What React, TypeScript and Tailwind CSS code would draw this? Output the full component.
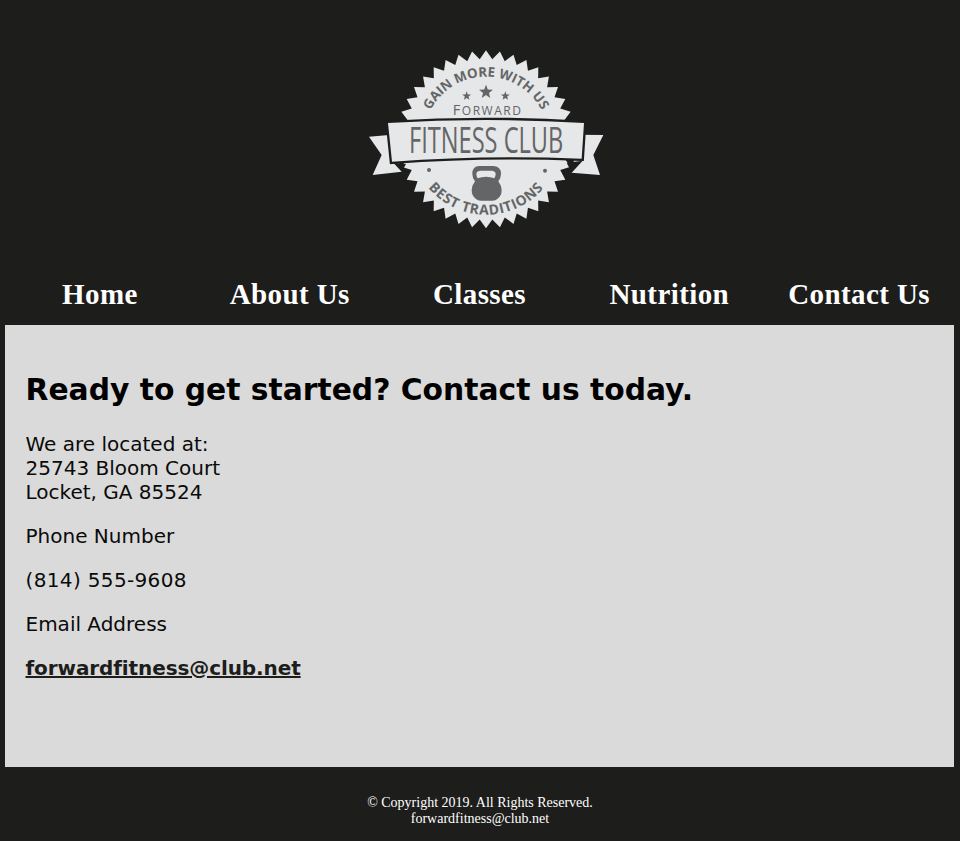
const seal = () => {
  const points: string[] = [];
  const teeth = 40;
  for (let i = 0; i < teeth * 2; i++) {
    const r = i % 2 === 0 ? 267 : 241;
    const a = (Math.PI * i) / teeth - Math.PI / 2;
    points.push(`${(378 + r * Math.cos(a)).toFixed(1)},${(298 + r * Math.sin(a)).toFixed(1)}`);
  }
  return points.join(" ");
};

const star = (cx: number, cy: number, r: number) => {
  const points: string[] = [];
  for (let i = 0; i < 10; i++) {
    const d = i % 2 === 0 ? r : r * 0.42;
    const a = (Math.PI * i) / 5 - Math.PI / 2;
    points.push(`${(cx + d * Math.cos(a)).toFixed(1)},${(cy + d * Math.sin(a)).toFixed(1)}`);
  }
  return points.join(" ");
};

const Logo = () => (
  <svg viewBox="-15 0 750 585" className="block mx-auto w-[250px] h-[195px]">
    <defs>
      <path id="topArc" d="M 190 298 A 188 188 0 0 1 566 298" />
      <path id="bottomArc" d="M 158 350 A 226 226 0 0 0 598 350" />
    </defs>
    <polygon points={seal()} fill="#e6e7e8" />
    <polygon points="27,290 95,284 125,395 38,405 65,345" fill="#e6e7e8" />
    <polygon points="655,284 730,285 700,345 720,405 635,398" fill="#e6e7e8" />
    <polygon points="100,368 138,372 125,395" fill="#1d1d1b" />
    <polygon points="620,368 668,362 635,398" fill="#1d1d1b" />
    <path
      d="M84 249 Q378 231 672 249 L665 356 Q378 344 96 365 Z"
      fill="#e6e7e8"
      stroke="#1d1d1b"
      strokeWidth="14"
      paintOrder="stroke"
    />
    <g fill="#646566" fontFamily="'Open Sans', sans-serif">
      <text fontSize="40" fontWeight="700">
        <textPath href="#topArc" startOffset="50%" textAnchor="middle">GAIN MORE WITH US</textPath>
      </text>
      <text fontSize="42" fontWeight="700" letterSpacing="2">
        <textPath href="#bottomArc" startOffset="50%" textAnchor="middle">BEST TRADITIONS</textPath>
      </text>
      <text x="278" y="226" fontSize="36" letterSpacing="4" textLength="209" lengthAdjust="spacing">
        <tspan fontSize="44">F</tspan>ORWARD
      </text>
      <text x="147" y="340" fontSize="108" textLength="463" lengthAdjust="spacingAndGlyphs">FITNESS CLUB</text>
    </g>
    <g fill="#646566">
      <polygon points={star(320, 168, 14)} />
      <polygon points={star(378, 156, 22)} />
      <polygon points={star(436, 168, 14)} />
      <circle cx="207" cy="390" r="6" />
      <circle cx="555" cy="392" r="6" />
      <path
        fillRule="evenodd"
        d="M358 378 h40 q25 0 25 24 q0 12 -8 22 q10 14 10 26 q0 18 -12 26 q-6 6 -16 6 h-34 q-10 0 -16 -6 q-12 -8 -12 -26 q0 -12 10 -26 q-8 -10 -8 -22 q0 -24 21 -24 z M362 392 q-13 0 -13 11 q0 7 4 12 q25 -9 50 0 q4 -5 4 -12 q0 -11 -13 -11 z"
      />
    </g>
  </svg>
);

const links = ["Home", "About Us", "Classes", "Nutrition", "Contact Us"];

export default function App() {
  return (
    <div className="bg-[#1d1d1b] h-[841px] pt-10">
      <Logo />
      <nav className="grid grid-cols-5 mx-[5px] w-[949px] h-[90px] pt-[40px]">
        {links.map((link) => (
          <a
            key={link}
            href="#"
            className="text-center text-white font-bold text-[29px] tracking-[0.4px] leading-[38px] font-['Liberation_Serif',serif]"
          >
            {link}
          </a>
        ))}
      </nav>
      <main className="mx-[5px] w-[949px] h-[442px] bg-[#dadada] pl-[20.5px] pr-5 pt-[45px] text-[#0a0a0a] font-['DejaVu_Sans',sans-serif] text-[20px] leading-6">
        <h1 className="text-[29.75px] leading-[40px] font-bold text-black mb-[22px]">
          Ready to get started? Contact us today.
        </h1>
        <p className="mb-5">
          We are located at:
          <br />
          25743 Bloom Court
          <br />
          Locket, GA 85524
        </p>
        <p className="mb-5">Phone Number</p>
        <p className="mb-5 tracking-[0.35px]">(814) 555-9608</p>
        <p className="mb-5">Email Address</p>
        <p>
          <a href="#" className="font-bold underline text-[#1d1d1b] tracking-[-0.1px]">
            forwardfitness@club.net
          </a>
        </p>
      </main>
      <footer className="pt-[28px] text-center text-white text-[14px] leading-4 font-['Liberation_Serif',serif]">
        © Copyright 2019. All Rights Reserved.
        <br />
        forwardfitness@club.net
      </footer>
    </div>
  );
}
